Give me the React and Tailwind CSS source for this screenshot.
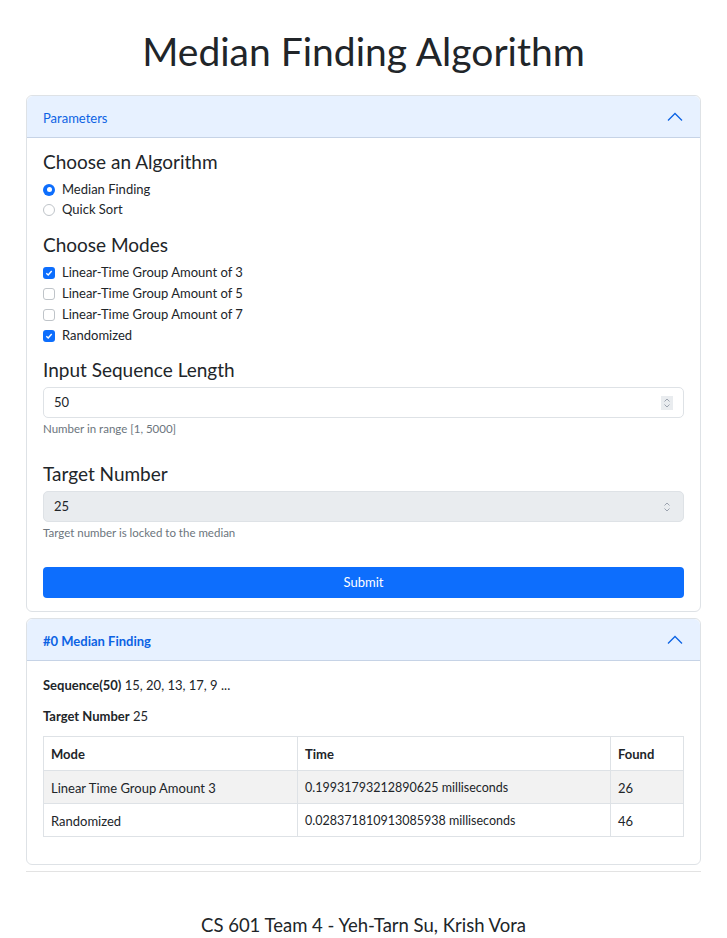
import React from "react";

const F = { fontFamily: "Lato, 'Noto Sans', sans-serif" };

function ChevronUp() {
  return (
    <svg width="16" height="10" viewBox="0 0 16 10" fill="none">
      <path d="M1 8.5 L8 1.5 L15 8.5" stroke="#0c63e4" strokeWidth="1.3" />
    </svg>
  );
}

function Spinner({ bg }) {
  return (
    <div className={`w-[12px] h-[14px] flex items-center justify-center ${bg}`}>
      <svg width="8" height="12" viewBox="0 0 8 12" fill="none">
        <path d="M1.5 4.5 L4 2 L6.5 4.5" stroke="#9ca3af" strokeWidth="1" />
        <path d="M1.5 7.5 L4 10 L6.5 7.5" stroke="#9ca3af" strokeWidth="1" />
      </svg>
    </div>
  );
}

function Radio({ checked, label }) {
  return (
    <div className="h-[20px] flex items-center gap-[7px] pt-[1px]">
      {checked ? (
        <span className="w-[12px] h-[12px] rounded-full bg-[#0d6efd] flex items-center justify-center">
          <span className="w-[5px] h-[5px] rounded-full bg-white" />
        </span>
      ) : (
        <span className="w-[12px] h-[12px] rounded-full border border-[#bfc4c9] bg-white" />
      )}
      <span className="text-[13px] text-[#212529]">{label}</span>
    </div>
  );
}

function Check({ checked, label }) {
  return (
    <div className="h-[21px] flex items-center gap-[7px]">
      {checked ? (
        <span className="w-[12px] h-[12px] rounded-[3px] bg-[#0d6efd] flex items-center justify-center">
          <svg width="8" height="8" viewBox="0 0 8 8" fill="none">
            <path d="M1.3 4.2 L3.2 6 L6.7 2" stroke="white" strokeWidth="1.4" />
          </svg>
        </span>
      ) : (
        <span className="w-[12px] h-[12px] rounded-[3px] border border-[#bfc4c9] bg-white" />
      )}
      <span className="text-[13px] text-[#212529]">{label}</span>
    </div>
  );
}

function Header({ children, bold }) {
  return (
    <div className="h-[42px] bg-[#e7f1ff] border-b border-[#c6d3e6] flex items-center justify-between pl-[16px] pr-[17px] rounded-t-[6px]">
      <span className={`pt-[4px] text-[13px] text-[#0c63e4] ${bold ? "font-bold" : ""}`}>{children}</span>
      <ChevronUp />
    </div>
  );
}

export default function App() {
  return (
    <div className="w-[727px] min-h-[938px] bg-white text-[#212529]" style={F}>
      <div className="px-[26px]">
        <h1 className="pt-[27px] h-[75px] leading-[48px] text-[39px] text-center text-[#212529]">
          Median Finding Algorithm
        </h1>
        <div className="mt-[20px] border border-[#dee2e6] rounded-[6px]">
          <Header>Parameters</Header>
          <div className="px-[16px] pt-[12px] pb-[13px] flex flex-col">
            <div className="h-[24px] leading-[24px] text-[19px]">Choose an Algorithm</div>
            <div className="mt-[5px]">
              <Radio checked label="Median Finding" />
              <Radio label="Quick Sort" />
            </div>
            <div className="mt-[14px] h-[24px] leading-[24px] text-[19px]">Choose Modes</div>
            <div className="mt-[5px]">
              <Check checked label="Linear-Time Group Amount of 3" />
              <Check label="Linear-Time Group Amount of 5" />
              <Check label="Linear-Time Group Amount of 7" />
              <Check checked label="Randomized" />
            </div>
            <div className="mt-[12px] h-[24px] leading-[24px] text-[19px]">Input Sequence Length</div>
            <div className="mt-[5px] h-[31px] border border-[#dee2e6] rounded-[5px] flex items-center justify-between pl-[10px] pr-[10px]">
              <span className="text-[13px]">50</span>
              <Spinner bg="bg-[#e9ecef]" />
            </div>
            <div className="mt-[4px] h-[14px] leading-[14px] text-[11.5px] text-[#6c757d]">Number in range [1, 5000]</div>
            <div className="mt-[26px] h-[24px] leading-[24px] text-[19px]">Target Number</div>
            <div className="mt-[5px] h-[31px] border border-[#dee2e6] rounded-[5px] bg-[#e9ecef] flex items-center justify-between pl-[10px] pr-[10px]">
              <span className="text-[13px]">25</span>
              <Spinner bg="" />
            </div>
            <div className="mt-[4px] h-[14px] leading-[14px] text-[11.5px] text-[#6c757d]">Target number is locked to the median</div>
            <button className="mt-[27px] h-[31px] rounded-[4px] bg-[#0d6efd] text-white text-[13px]">Submit</button>
          </div>
        </div>

        <div className="mt-[6px] border border-[#dee2e6] rounded-[6px]">
          <Header bold>#0 Median Finding</Header>
          <div className="px-[16px] pt-[15px] pb-[27px]">
            <div className="h-[18px] leading-[18px] text-[13px]">
              <span className="font-bold">Sequence(50)</span> 15, 20, 13, 17, 9 ...
            </div>
            <div className="mt-[13px] h-[18px] leading-[18px] text-[13px]">
              <span className="font-bold">Target Number</span> 25
            </div>
            <table className="mt-[11px] w-full border-collapse text-[13px]">
              <thead>
                <tr className="h-[34px]">
                  <th className="w-[254px] border border-[#dee2e6] text-left font-bold px-[7px] pt-[3px]">Mode</th>
                  <th className="w-[313px] border border-[#dee2e6] text-left font-bold px-[7px] pt-[3px]">Time</th>
                  <th className="border border-[#dee2e6] text-left font-bold px-[7px] pt-[3px]">Found</th>
                </tr>
              </thead>
              <tbody>
                <tr className="h-[33px] bg-[#f2f2f2]">
                  <td className="border border-[#dee2e6] px-[7px] pt-[3px]">Linear Time Group Amount 3</td>
                  <td className="border border-[#dee2e6] px-[7px] pt-[3px] text-[12.5px]">0.19931793212890625 milliseconds</td>
                  <td className="border border-[#dee2e6] px-[7px] pt-[3px]">26</td>
                </tr>
                <tr className="h-[33px]">
                  <td className="border border-[#dee2e6] px-[7px] pt-[3px]">Randomized</td>
                  <td className="border border-[#dee2e6] px-[7px] pt-[3px] text-[12.5px]">0.028371810913085938 milliseconds</td>
                  <td className="border border-[#dee2e6] px-[7px] pt-[3px]">46</td>
                </tr>
              </tbody>
            </table>
          </div>
        </div>
        <div className="mt-[6px] h-px bg-[#e3e3e3]" />
        <div className="mt-[41px] text-center text-[18.5px] leading-[24px]">
          CS 601 Team 4 - Yeh-Tarn Su, Krish Vora
        </div>
      </div>
    </div>
  );
}
